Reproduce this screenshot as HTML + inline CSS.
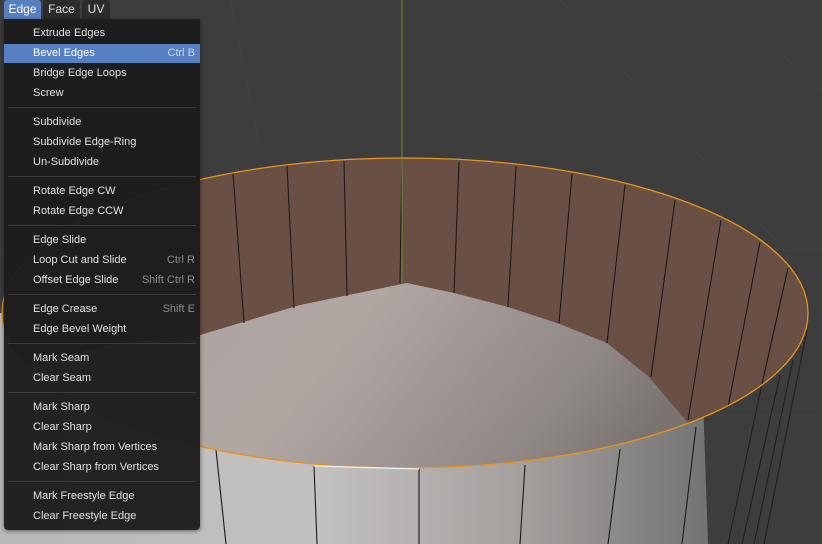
<!DOCTYPE html>
<html><head><meta charset="utf-8"><style>
html,body{margin:0;padding:0;width:822px;height:544px;overflow:hidden;background:#3d3d3d;font-family:"Liberation Sans","DejaVu Sans",sans-serif}
svg{position:absolute;left:0;top:0}
.tab{position:absolute;top:0;height:19px;background:#2c2c2c;color:#e0e0e0;font-size:12px;line-height:19px;text-align:center;border-radius:3px 3px 0 0}
.menu{position:absolute;left:4px;top:19px;width:196px;height:511px;background:rgba(28,28,28,0.96);border-radius:0 0 4px 4px;box-shadow:0 1px 4px rgba(0,0,0,.5)}
.it{position:absolute;left:0;width:196px;height:19px;color:#e2e2e2;font-size:11px;line-height:21px}
.it span{position:absolute;left:29px}
.it i{position:absolute;right:5px;font-style:normal;color:#8c8c8c}
.it.hl{background:#5680c2;color:#fff;line-height:19px}
.it.hl i{color:#c9d6ec}
.sep{position:absolute;left:4px;width:188px;height:1px;background:#3a3a3a}
</style></head><body>
<svg width="822" height="544" viewBox="0 0 822 544">
<defs>
<clipPath id="el"><ellipse cx="405" cy="313" rx="403" ry="155"/></clipPath>
<linearGradient id="fw" x1="0" x2="1"><stop offset="0" stop-color="#b9b9b9"/><stop offset="0.45" stop-color="#c3c1c0"/><stop offset="0.75" stop-color="#a39e9c"/><stop offset="1" stop-color="#737373"/></linearGradient>
<linearGradient id="cn" x1="0" y1="0" x2="1" y2="0.3"><stop offset="0" stop-color="#a8a2a0"/><stop offset="0.5" stop-color="#b1a6a2"/><stop offset="0.85" stop-color="#8f8885"/><stop offset="1" stop-color="#7a7370"/></linearGradient>
</defs>
<g stroke="#454545" stroke-width="1" opacity="0.6">
<line x1="0" y1="250" x2="822" y2="250"/><line x1="0" y1="415" x2="822" y2="415"/>
<line x1="230" y1="0" x2="260" y2="150"/><line x1="560" y1="0" x2="820" y2="290"/><line x1="720" y1="0" x2="822" y2="90"/>
</g>
<polygon points="0,313 700,313 708,544 0,544" fill="url(#fw)"/>
<g stroke="#222" stroke-width="1.2">
<line x1="760" y1="393" x2="728" y2="544"/><line x1="793" y1="360" x2="754" y2="544"/><line x1="807" y1="330" x2="764" y2="544"/><line x1="780" y1="375" x2="742" y2="544"/>
</g>
<ellipse cx="405" cy="313" rx="403" ry="155" fill="#6a5044"/>
<g clip-path="url(#el)">
<polygon points="407,283 454,293 508,307 557,323 607,343 649,377 688,423 705,470 708,544 0,544 0,370 120,343 200,335 300,305" fill="url(#cn)"/>
</g>
<g stroke="#1a1a1a" stroke-width="1.1">
<line x1="233" y1="173" x2="244" y2="323"/><line x1="287" y1="165" x2="294" y2="308"/><line x1="344" y1="161" x2="347" y2="296"/><line x1="402" y1="159" x2="400" y2="283"/><line x1="459" y1="162" x2="454" y2="293"/><line x1="516" y1="166" x2="508" y2="307"/><line x1="572" y1="174" x2="559" y2="323"/><line x1="625" y1="185" x2="607" y2="343"/><line x1="675" y1="200" x2="651" y2="377"/><line x1="721" y1="220" x2="688" y2="420"/><line x1="760" y1="242" x2="728" y2="407"/><line x1="788" y1="268" x2="760" y2="393"/>
<line x1="216" y1="450" x2="226" y2="544"/><line x1="314" y1="466" x2="317" y2="544"/><line x1="419" y1="469" x2="419" y2="544"/><line x1="525" y1="465" x2="520" y2="544"/><line x1="620" y1="449" x2="608" y2="544"/><line x1="696" y1="427" x2="682" y2="544"/>
</g>
<line x1="402" y1="0" x2="402" y2="283" stroke="#6f8a2e" stroke-width="1"/>
<ellipse cx="405" cy="313" rx="403" ry="155" fill="none" stroke="#e8941c" stroke-width="1.3"/>
<line x1="314" y1="466" x2="419" y2="469" stroke="#eee" stroke-width="1.3"/>
</svg>
<div class="tab" style="left:4px;width:37px;background:#5680c2;color:#fff">Edge</div>
<div class="tab" style="left:43px;width:37px">Face</div>
<div class="tab" style="left:82px;width:28px">UV</div>
<div class="menu">
<div class="it" style="top:4px"><span>Extrude Edges</span></div>
<div class="it hl" style="top:25px"><span>Bevel Edges</span><i>Ctrl B</i></div>
<div class="it" style="top:44px"><span>Bridge Edge Loops</span></div>
<div class="it" style="top:64px"><span>Screw</span></div>
<div class="sep" style="top:88px"></div>
<div class="it" style="top:93px"><span>Subdivide</span></div>
<div class="it" style="top:113px"><span>Subdivide Edge-Ring</span></div>
<div class="it" style="top:133px"><span>Un-Subdivide</span></div>
<div class="sep" style="top:157px"></div>
<div class="it" style="top:162px"><span>Rotate Edge CW</span></div>
<div class="it" style="top:182px"><span>Rotate Edge CCW</span></div>
<div class="sep" style="top:206px"></div>
<div class="it" style="top:211px"><span>Edge Slide</span></div>
<div class="it" style="top:231px"><span>Loop Cut and Slide</span><i>Ctrl R</i></div>
<div class="it" style="top:251px"><span>Offset Edge Slide</span><i>Shift Ctrl R</i></div>
<div class="sep" style="top:275px"></div>
<div class="it" style="top:280px"><span>Edge Crease</span><i>Shift E</i></div>
<div class="it" style="top:300px"><span>Edge Bevel Weight</span></div>
<div class="sep" style="top:324px"></div>
<div class="it" style="top:329px"><span>Mark Seam</span></div>
<div class="it" style="top:349px"><span>Clear Seam</span></div>
<div class="sep" style="top:373px"></div>
<div class="it" style="top:378px"><span>Mark Sharp</span></div>
<div class="it" style="top:398px"><span>Clear Sharp</span></div>
<div class="it" style="top:418px"><span>Mark Sharp from Vertices</span></div>
<div class="it" style="top:438px"><span>Clear Sharp from Vertices</span></div>
<div class="sep" style="top:462px"></div>
<div class="it" style="top:467px"><span>Mark Freestyle Edge</span></div>
<div class="it" style="top:487px"><span>Clear Freestyle Edge</span></div>
</div>
</body></html>
